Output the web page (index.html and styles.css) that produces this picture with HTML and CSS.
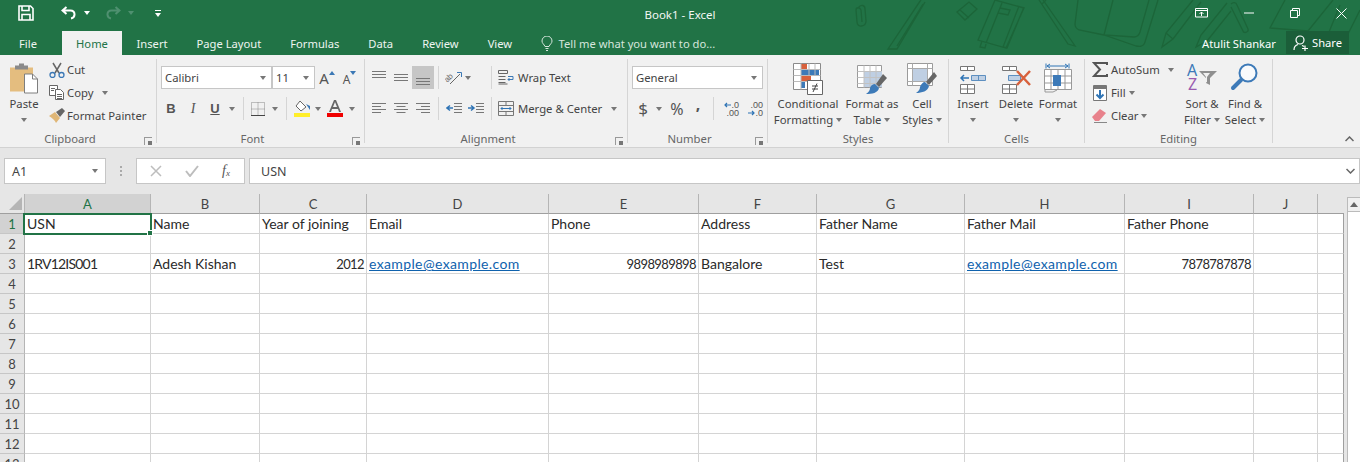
FILE: index.html
```html
<!DOCTYPE html>
<html lang="en">
<head>
<meta charset="utf-8">
<title>Book1 - Excel</title>
<link rel="stylesheet" href="styles.css">
</head>
<body>
<header class="chrome">
  <svg class="doodles" width="520" height="55" viewBox="840 0 520 55" fill="none" stroke="#1c6539" stroke-width="1.3">
    <path d="M858 8c3-4 7-3 7 1l1 12c0 6-9 7-9 1l-1-12c0-3 4-3 5 0l1 12"/>
    <path d="M921 0l-33 49h9l28-47M892 43l28-42M897 46l26-42"/>
    <path d="M957 12l12-10 8 7-12 11zM960 10l9 8"/>
    <path d="M995 0l-17 40 28 8 18-40zM1002 3l-16 40M1019 6l-16 41 4 1 17-41M1000 8l10 2-2 5-10-2zM982 41l-2 6 5 1 1-4"/>
    <path d="M1043 0l28 40 4 6-7-2-29-44M1046 0l-4 4"/>
    <path d="M1078 0l-3 24c0 3 2 5 4 6l25 5 32 11c4 1 8 0 9-4l13-42M1113 0l-9 35 30 2c3 0 5-2 6-5l9-32"/>
    <path d="M1193 0l-27 33-4 14 11-8 28-37M1166 33l7 6"/>
    <path d="M1231 4c2-2 5-2 6 1l11 24c1 3-4 5-5 2l-12-24M1227 3l-26 32-5 12 11-6 24-30"/>
    <path d="M1285 0l-15 28 38 3 25-31M1340 5l-13 32M1345 40l15-30"/>
  </svg>
  <div class="titlebar">
    <div class="qat">
      <svg class="q-save" width="16" height="16" viewBox="0 0 16 16" fill="none" stroke="#fff" stroke-width="1.6"><path d="M1 1h11.5L15 3.500V15H1z"/><path d="M4 1v4.500h7V1M4 15V9.500h8V15"/></svg>
      <svg class="q-undo" width="16" height="14" viewBox="0 0 16 14" fill="none" stroke="#fff" stroke-width="2"><path d="M5.500 1L1.500 4.500 5.500 8M2 4.500h7.500c5 0 5.500 7 .5 8"/></svg>
      <span class="caret caret-white q-c1"></span>
      <svg class="q-redo" width="16" height="14" viewBox="0 0 16 14" fill="none" stroke="#4f9070" stroke-width="2"><path d="M10.500 1l4 3.500-4 3.500M14 4.500H6.500c-5 0-5.500 7-.5 8"/></svg>
      <span class="caret caret-dim q-c2"></span>
      <span class="q-custom"><i></i><span class="caret caret-white"></span></span>
    </div>
    <div class="doc-title">Book1 - Excel</div>
    <div class="winctl">
      <svg width="14" height="10" viewBox="0 0 14 10" fill="none" stroke="#fff"><path d="M.5.500h12v8.500H.5zM.5 2.500h12M6.500 8V4M4.500 6l2-2 2 2"/></svg>
      <svg width="10" height="2" viewBox="0 0 10 2" fill="none" stroke="#fff"><path d="M0 1h10"/></svg>
      <svg width="10" height="10" viewBox="0 0 10 10" fill="none" stroke="#fff"><path d="M.5 2.500h7v7h-7zM2.500 2.500v-2h7v7h-2"/></svg>
      <svg width="11" height="11" viewBox="0 0 11 11" fill="none" stroke="#fff"><path d="M.5.500l10 10M10.500.500l-10 10"/></svg>
    </div>
  </div>
  <nav class="tabs">
    <span class="tab tab-file">File</span>
    <span class="tab tab-home">Home</span>
    <span class="tab">Insert</span>
    <span class="tab">Page Layout</span>
    <span class="tab">Formulas</span>
    <span class="tab">Data</span>
    <span class="tab">Review</span>
    <span class="tab">View</span>
    <span class="tell">
      <svg width="12" height="15" viewBox="0 0 12 15" fill="none" stroke="#d6e6dd"><path d="M4 10.500C3 8 1 7.500 1 5a5 5 0 0 1 10 0c0 2.500-2 3-3 5.500zM4.500 12.500h3M5 14.500h2"/></svg>
      Tell me what you want to do...
    </span>
    <span class="user">Atulit Shankar</span>
    <span class="share">
      <svg width="16" height="16" viewBox="0 0 16 16" fill="none" stroke="#fff" stroke-width="1.200"><circle cx="7" cy="5" r="4"/><path d="M1 15c0-3 2-5 4-5.500M9 10.500c1 .3 1.500 .5 2 1M9 13.500h6M12 10.500v6"/></svg>
      Share
    </span>
  </nav>
</header>

<section class="ribbon">
  <div class="group g-clip">
    <div class="body clip-body">
      <div class="big paste">
        <svg width="30" height="31" viewBox="0 0 30 31"><path fill="#e4bd7f" d="M1 4h23v24H1z"/><path fill="#8a8a8a" d="M6 2h13v4H6zM10 0h5v2h-5z"/><path fill="#fff" stroke="#7e7e7e" d="M15.500 10.500h8l5 5v14h-13z"/><path fill="none" stroke="#7e7e7e" d="M23.500 10.500v5h5"/></svg>
        <span>Paste</span>
        <span class="caret"></span>
      </div>
      <div class="smalls">
        <div class="small"><svg width="16" height="16" viewBox="0 0 16 16" fill="none"><path stroke="#666" stroke-width="1.500" d="M4 1l6 10M12 1L6 11"/><circle cx="3.500" cy="13" r="2.500" stroke="#3b78b5" stroke-width="1.300"/><circle cx="12.500" cy="13" r="2.500" stroke="#3b78b5" stroke-width="1.300"/></svg><span>Cut</span></div>
        <div class="small"><svg width="16" height="15" viewBox="0 0 16 15" fill="#fff" stroke="#666"><path d="M.5.500h8v10h-8z"/><path d="M6.500 4.500h5l3 3v7h-8z"/><path d="M8 9.500h5M8 11.500h5M8 13.500h5M2 3.500h4M2 5.500h3"/></svg><span>Copy</span><span class="caret c-copy"></span></div>
        <div class="small"><svg width="16" height="15" viewBox="0 0 16 15"><path fill="#e0b777" d="M0 8l6-4 5 6-4 5c-1-3-4-5-7-7z"/><path fill="#666" d="M7 4l6-4 3 3-5 6z"/></svg><span>Format Painter</span></div>
      </div>
    </div>
    <div class="glabel has-launcher">Clipboard</div>
    <span class="launcher"></span>
  </div>

  <div class="group g-font">
    <div class="body">
      <div class="rrow font-r1">
        <div class="combo combo-font"><span>Calibri</span><span class="caret"></span></div>
        <div class="combo combo-size"><span>11</span><span class="caret"></span></div>
        <div class="tool tool-grow"><span class="a-big">A</span><svg width="6" height="4" viewBox="0 0 6 4"><path fill="#3b78b5" d="M0 4l3-4 3 4z"/></svg></div>
        <div class="tool tool-grow"><span class="a-small">A</span><svg width="6" height="4" viewBox="0 0 6 4"><path fill="#3b78b5" d="M0 0l3 4 3-4z"/></svg></div>
      </div>
      <div class="rrow grid-row font-r2">
        <div class="tool t-b">B</div>
        <div class="tool t-i">I</div>
        <div class="tool t-u">U</div>
        <div class="tool"><span class="caret"></span></div>
        <div class="tool"><i class="vsep"></i></div>
        <div class="tool"><svg width="14" height="14" viewBox="0 0 14 14" fill="none" stroke="#888" stroke-dasharray="1 1"><path d="M.5.500h13v13H.5zM.5 7h13M7 .500v13"/><path stroke="#444" stroke-dasharray="none" d="M0 13.500h14"/></svg></div>
        <div class="tool"><span class="caret"></span></div>
        <div class="tool"><i class="vsep"></i></div>
        <div class="tool"><svg width="17" height="17" viewBox="0 0 17 17"><path fill="#fff" stroke="#666" d="M6 1l6 6-5 4-5-5z"/><path fill="#3b78b5" d="M12 4l4 2v4z"/><path fill="#ffee2a" d="M0 13h16v4H0z"/></svg></div>
        <div class="tool"><span class="caret"></span></div>
        <div class="tool"><svg width="16" height="17" viewBox="0 0 16 17"><path fill="#666" d="M7 0h2l5 12h-2l-1-3H5l-1 3H2zM6 7h4L8 2z"/><path fill="#f00000" d="M0 13h16v4H0z"/></svg></div>
        <div class="tool"><span class="caret"></span></div>
      </div>
    </div>
    <div class="glabel has-launcher">Font</div>
    <span class="launcher"></span>
  </div>

  <div class="group g-align">
    <div class="body">
      <div class="rrow grid-row align-r1">
        <div class="tool tool-top"><svg width="14" height="8" viewBox="0 0 14 8" stroke="#777"><path d="M0 .500h14M0 3.500h14M0 6.500h14"/></svg></div>
        <div class="tool"><svg width="14" height="8" viewBox="0 0 14 8" stroke="#777"><path d="M0 .500h14M0 3.500h14M0 6.500h14"/></svg></div>
        <div class="tool tool-on"><svg width="14" height="8" viewBox="0 0 14 8" stroke="#777"><path d="M0 .500h14M0 3.500h14M0 6.500h14"/></svg></div>
        <div class="tool"><i class="vsep"></i></div>
        <div class="tool"><svg width="18" height="15" viewBox="0 0 18 15" fill="none" stroke="#666"><text class="orient" transform="rotate(-45 5 10)" x="1" y="10">ab</text><path d="M5 14L15 4"/><path stroke="#3b78b5" d="M12 2.500h4.500V7"/></svg></div>
        <div class="tool tool-start"><span class="caret"></span></div>
        <div class="tool"><i class="vsep"></i></div>
        <div class="small wide-item"><svg width="16" height="15" viewBox="0 0 16 15" fill="none" stroke="#666"><path d="M.5.500h9v3h-9zM.5 6.500h7M.5 9.500h7M.5 12.500h7M.5 14h9"/><path stroke="#3b78b5" d="M10 6.500h5v3h-5M11.500 8L10 9.500l1.500 1.500"/></svg><span>Wrap Text</span></div>
      </div>
      <div class="rrow grid-row align-r2">
        <div class="tool"><svg width="14" height="11" viewBox="0 0 14 11" stroke="#777"><path d="M0 .500h14M0 3.500h9M0 6.500h14M0 9.500h9"/></svg></div>
        <div class="tool"><svg width="14" height="11" viewBox="0 0 14 11" stroke="#777"><path d="M0 .500h14M2.500 3.500h9M0 6.500h14M2.500 9.500h9"/></svg></div>
        <div class="tool"><svg width="14" height="11" viewBox="0 0 14 11" stroke="#777"><path d="M0 .500h14M5 3.500h9M0 6.500h14M5 9.500h9"/></svg></div>
        <div class="tool"><i class="vsep"></i></div>
        <div class="tool"><svg width="16" height="11" viewBox="0 0 16 11" fill="none" stroke="#777"><path d="M8 .500h8M8 3.500h8M8 6.500h8M8 9.500h8"/><path stroke="#2f74b5" stroke-width="1.500" d="M7 5H1M4 2.500L1 5l3 2.500"/></svg></div>
        <div class="tool"><svg width="16" height="11" viewBox="0 0 16 11" fill="none" stroke="#777"><path d="M8 .500h8M8 3.500h8M8 6.500h8M8 9.500h8"/><path stroke="#2f74b5" stroke-width="1.500" d="M0 5h6M3 2.500L6 5 3 7.500"/></svg></div>
        <div class="tool"><i class="vsep"></i></div>
        <div class="small wide-item"><svg width="16" height="15" viewBox="0 0 16 15" fill="none" stroke="#777"><path d="M.5.500h15v14H.5zM.5 4.500h15M.5 10.500h15M8 .500v4M8 10.500v4"/><path stroke="#2f74b5" d="M3 7.500h10M4.500 6L3 7.500 4.500 9M11.500 6L13 7.500 11.500 9"/></svg><span>Merge &amp; Center</span><span class="caret c-merge"></span></div>
      </div>
    </div>
    <div class="glabel has-launcher">Alignment</div>
    <span class="launcher"></span>
  </div>

  <div class="group g-num">
    <div class="body">
      <div class="rrow font-r1">
        <div class="combo combo-num"><span>General</span><span class="caret"></span></div>
      </div>
      <div class="rrow grid-row num-r2">
        <div class="tool t-dollar">$</div>
        <div class="tool"><span class="caret"></span></div>
        <div class="tool t-pct">%</div>
        <div class="tool t-comma">,</div>
        <div class="tool"><i class="vsep"></i></div>
        <div class="tool t-dec">
          <span class="dec-line"><svg width="7" height="6" viewBox="0 0 7 6" fill="none" stroke="#2f74b5" stroke-width="1.200"><path d="M7 3H1M3 1L1 3l2 2"/></svg>.0</span>
          <span class="dec-line">.00</span>
        </div>
        <div class="tool t-dec">
          <span class="dec-line">.00</span>
          <span class="dec-line"><svg width="7" height="6" viewBox="0 0 7 6" fill="none" stroke="#2f74b5" stroke-width="1.200"><path d="M0 3h6M4 1l2 2-2 2"/></svg>.0</span>
        </div>
      </div>
    </div>
    <div class="glabel has-launcher">Number</div>
    <span class="launcher"></span>
  </div>

  <div class="group g-styles">
    <div class="body bigs">
      <div class="big bw-72">
        <svg width="30" height="32" viewBox="0 0 30 32"><path fill="#fff" stroke="#8a8a8a" d="M.5 .500h27v26H.5z"/><path fill="#d8613c" d="M8 1h6v5H8zM8 13h10v5H8z"/><path fill="#3d7ab8" d="M8 7h18v5H8zM8 19h4v6H8z"/><path stroke="#bbb" fill="none" d="M.5 6.500h27M.5 12.500h27M.5 18.500h27M8 .500v26M16 .500v12M22 .500v12"/><path fill="#fff" stroke="#666" d="M14.500 17.500h15v14h-15z"/><path stroke="#444" fill="none" d="M19 23h6M19 26h6M24 20.500l-4 8.500"/></svg>
        <span>Conditional<br>Formatting<i class="caret c-in"></i></span>
      </div>
      <div class="big bw-56">
        <svg width="30" height="32" viewBox="0 0 30 32"><path fill="#fff" stroke="#9a9a9a" d="M.5 2.500h24v22H.5z"/><path fill="#bfcfe3" d="M7 8h18v16H7z"/><path stroke="#c2c2c2" fill="none" d="M.5 8.500h24M.5 14.500h24M.5 20.500h24M7 2.500v22M13 2.500v22M19 2.500v22"/><path fill="#666" d="M26 11l4 4-8 9-3-3z"/><path fill="#3d7ab8" d="M18 21l4 4c-1 5-7 6-13 6 3-2 4-4 4-6 1-3 3-4 5-4z"/></svg>
        <span>Format as<br>Table<i class="caret c-in"></i></span>
      </div>
      <div class="big bw-44">
        <svg width="30" height="32" viewBox="0 0 30 32"><path fill="#fff" stroke="#9a9a9a" d="M.5 .500h25v22H.5z"/><path fill="#bfcfe3" d="M6 6h14v12H6z"/><path stroke="#aaa" fill="none" d="M5.500 .500v22M20.500 .500v22M.5 5.500h25M.5 18.500h25"/><path fill="#666" d="M27 9l3 4-8 9-3-3z"/><path fill="#3d7ab8" d="M18 19l4 4c-1 5-7 7-13 7 3-2 4-4 4-6 1-3 3-5 5-5z"/></svg>
        <span>Cell<br>Styles<i class="caret c-in"></i></span>
      </div>
    </div>
    <div class="glabel">Styles</div>
  </div>

  <div class="group g-cells">
    <div class="body bigs">
      <div class="big bw-42">
        <svg width="28" height="32" viewBox="0 0 28 32" fill="#fff" stroke="#777"><path d="M1.500 3.500h14v4h-14zM8.500 3.500v4M1.500 21.500h14v9h-14zM8.500 21.500v9M1.500 26h14"/><path fill="#bfd0e4" stroke="#5d8fc0" d="M12.500 12.500h14v5h-14zM19.500 12.500v5"/><path fill="none" stroke="#2f74b5" stroke-width="1.500" d="M10 15H2M5 12l-3 3 3 3"/></svg>
        <span>Insert</span><span class="caret c-low"></span>
      </div>
      <div class="big bw-44">
        <svg width="30" height="32" viewBox="0 0 30 32" fill="#fff" stroke="#777"><path d="M1.500 3.500h14v4h-14zM8.500 3.500v4M1.500 21.500h14v9h-14zM8.500 21.500v9M1.500 26h14"/><path fill="#bfd0e4" stroke="#5d8fc0" d="M7.500 12.500h12v5h-12z"/><path fill="none" stroke="#d8613c" stroke-width="2.500" d="M16 8l13 14M29 8L16 22"/></svg>
        <span>Delete</span><span class="caret c-low"></span>
      </div>
      <div class="big bw-40">
        <svg width="28" height="32" viewBox="0 0 28 32" fill="#fff" stroke="#999"><path fill="none" stroke="#2f74b5" d="M2 .500v5M25 .500v5M3 3h21M6 1l-3 2 3 2M21 1l3 2-3 2"/><path d="M.500 6.500h27v20H.500z"/><path fill="none" d="M.5 13h27M.5 20h27M7 6.500v20M14 6.500v20M21 6.500v20"/><path fill="#3d7ab8" stroke="none" d="M9 12h8v11H9z"/><path fill="none" d="M1 27v2h8l4-2"/></svg>
        <span>Format</span><span class="caret c-low"></span>
      </div>
    </div>
    <div class="glabel">Cells</div>
  </div>

  <div class="group g-edit">
    <div class="body edit-body">
      <div class="smalls edit-smalls">
        <div class="small"><svg width="16" height="15" viewBox="0 0 16 15" fill="none" stroke="#555" stroke-width="2"><path d="M15 3V1H2l6 6.500L2 14h13v-2"/></svg><span>AutoSum</span><span class="caret c-auto"></span></div>
        <div class="small"><svg width="14" height="16" viewBox="0 0 14 16"><path fill="#fff" stroke="#777" d="M.5 .500h13v15H.5z"/><path fill="#777" d="M1 1h12v3H1z"/><path fill="none" stroke="#2f74b5" stroke-width="2" d="M7 5v8M3.500 9.500L7 13l3.500-3.500"/></svg><span>Fill</span><span class="caret c-fill"></span></div>
        <div class="small"><svg width="16" height="15" viewBox="0 0 16 15"><path fill="#e8828c" d="M0 9l8-8 6 4-7 8H3z"/><path stroke="#888" d="M2 14.500h13"/></svg><span>Clear</span><span class="caret c-fill"></span></div>
      </div>
      <div class="big bw-44">
        <svg width="32" height="32" viewBox="0 0 32 32"><text class="az a" x="1" y="13">A</text><text class="az z" x="2" y="27">Z</text><path fill="#8f8f8f" d="M13 8h18l-7 7v7l-4-2v-5zM17 10l3 4v5l1 .5V14l3-4z"/></svg>
        <span>Sort &amp;<br>Filter<i class="caret c-in"></i></span>
      </div>
      <div class="big bw-42">
        <svg width="30" height="32" viewBox="0 0 30 32" fill="none"><circle cx="18" cy="10" r="8.500" fill="#f8fafc" stroke="#3d7ab8" stroke-width="2"/><path stroke="#3d7ab8" stroke-width="4" stroke-linecap="round" d="M11 17l-8 8"/></svg>
        <span>Find &amp;<br>Select<i class="caret c-in"></i></span>
      </div>
    </div>
    <div class="glabel">Editing</div>
  </div>
  <svg class="collapse" width="9" height="6" viewBox="0 0 9 6" fill="none" stroke="#666" stroke-width="1.500"><path d="M.5 5l4-4 4 4"/></svg>
</section>

<section class="fbar">
  <div class="namebox"><span>A1</span><span class="caret"></span></div>
  <div class="dots"><i></i><i></i><i></i></div>
  <div class="fbtns">
    <svg width="12" height="12" viewBox="0 0 12 12" fill="none" stroke="#bdbdbd" stroke-width="1.500"><path d="M1 1l10 10M11 1L1 11"/></svg>
    <svg width="14" height="12" viewBox="0 0 14 12" fill="none" stroke="#bdbdbd" stroke-width="2"><path d="M1 6l4 5 8-10"/></svg>
    <span class="fx">f<sub>x</sub></span>
  </div>
  <div class="finput"><span>USN</span>
    <svg width="9" height="6" viewBox="0 0 9 6" fill="none" stroke="#666" stroke-width="1.500"><path d="M.5 1l4 4 4-4"/></svg>
  </div>
</section>

<main class="sheet">
  <table class="grid">
    <colgroup>
      <col class="c-row"><col class="c-a"><col class="c-b"><col class="c-c"><col class="c-d"><col class="c-e"><col class="c-f"><col class="c-g"><col class="c-h"><col class="c-i"><col class="c-j"><col class="c-k">
    </colgroup>
    <thead>
      <tr>
        <th class="corner"><i></i></th>
        <th class="sel-head">A</th><th>B</th><th>C</th><th>D</th><th>E</th><th>F</th><th>G</th><th>H</th><th>I</th><th>J</th><th class="blank"></th>
      </tr>
    </thead>
    <tbody>
      <tr><th class="sel-row">1</th><td class="active">USN<i class="cursor"></i></td><td>Name</td><td>Year of joining</td><td>Email</td><td>Phone</td><td>Address</td><td>Father Name</td><td>Father Mail</td><td>Father Phone</td><td></td><td></td></tr>
      <tr><th>2</th><td></td><td></td><td></td><td></td><td></td><td></td><td></td><td></td><td></td><td></td><td></td></tr>
      <tr><th>3</th><td class="digits">1RV12IS001</td><td>Adesh Kishan</td><td class="num">2012</td><td><a class="link">example@example.com</a></td><td class="num">9898989898</td><td>Bangalore</td><td>Test</td><td><a class="link">example@example.com</a></td><td class="num">7878787878</td><td></td><td></td></tr>
      <tr><th>4</th><td></td><td></td><td></td><td></td><td></td><td></td><td></td><td></td><td></td><td></td><td></td></tr>
      <tr><th>5</th><td></td><td></td><td></td><td></td><td></td><td></td><td></td><td></td><td></td><td></td><td></td></tr>
      <tr><th>6</th><td></td><td></td><td></td><td></td><td></td><td></td><td></td><td></td><td></td><td></td><td></td></tr>
      <tr><th>7</th><td></td><td></td><td></td><td></td><td></td><td></td><td></td><td></td><td></td><td></td><td></td></tr>
      <tr><th>8</th><td></td><td></td><td></td><td></td><td></td><td></td><td></td><td></td><td></td><td></td><td></td></tr>
      <tr><th>9</th><td></td><td></td><td></td><td></td><td></td><td></td><td></td><td></td><td></td><td></td><td></td></tr>
      <tr><th>10</th><td></td><td></td><td></td><td></td><td></td><td></td><td></td><td></td><td></td><td></td><td></td></tr>
      <tr><th>11</th><td></td><td></td><td></td><td></td><td></td><td></td><td></td><td></td><td></td><td></td><td></td></tr>
      <tr><th>12</th><td></td><td></td><td></td><td></td><td></td><td></td><td></td><td></td><td></td><td></td><td></td></tr>
      <tr><th>13</th><td></td><td></td><td></td><td></td><td></td><td></td><td></td><td></td><td></td><td></td><td></td></tr>
    </tbody>
  </table>
  <div class="vscroll">
    <div class="sb-up"><span class="caret caret-up"></span></div>
  </div>
</main>
</body>
</html>
```
FILE: styles.css
```css
* { box-sizing: border-box; }
html, body { margin: 0; height: 462px; overflow: hidden; }
body { width: 1360px; background: #e6e6e6; font-family: "Noto Sans", "Open Sans", sans-serif; font-size: 11.3px; color: #444; }
i { font-style: normal; }

.caret { display: inline-block; width: 0; height: 0; border-left: 3.5px solid transparent; border-right: 3.5px solid transparent; border-top: 4px solid #777; flex: none; }
.caret-white { border-top-color: #fff; }
.caret-dim { border-top-color: #4f9070; }
.caret-up { border-top: 0; border-bottom: 5px solid #666; border-left-width: 4px; border-right-width: 4px; }

/* title bar and tabs */
.chrome { position: relative; height: 55px; background: #217346; color: #fff; overflow: hidden; }
.doodles { position: absolute; left: 840px; top: 0; }
.titlebar { position: relative; height: 31px; display: flex; align-items: flex-start; }
.qat { width: 170px; display: flex; align-items: center; height: 26px; }
.q-save { margin-left: 18px; }
.q-undo { margin-left: 27px; }
.q-c1 { margin-left: 7px; }
.q-redo { margin-left: 15px; }
.q-c2 { margin-left: 7px; }
.q-custom { margin-left: 21px; display: flex; flex-direction: column; align-items: center; gap: 2px; }
.q-custom i { width: 6px; height: 1px; background: #fff; }
.doc-title { position: absolute; left: 0; right: 0; top: 6px; text-align: center; font-size: 11.5px; line-height: 17px; color: #f2f7f4; }
.winctl { margin-left: auto; height: 26px; display: flex; align-items: center; }
.winctl svg { margin-right: 36px; }
.winctl svg:first-child { margin-right: 35px; }
.winctl svg:last-child { margin-right: 13px; }

.tabs { position: relative; height: 24px; display: flex; align-items: stretch; font-size: 11.2px; }
.tab { display: flex; align-items: center; justify-content: center; color: #eef5f1; padding: 0 14.5px; }
.tab-file { width: 62px; padding: 0 6px 0 0; }
.tab-home { width: 60px; padding: 0; background: #f1f1f1; color: #217346; }
.tell { display: flex; align-items: center; gap: 6px; margin-left: 14px; color: #d6e6dd; }
.user { margin-left: auto; align-self: center; color: #fff; }
.share { display: flex; align-items: center; gap: 3px; margin: 0 11px 1px 10px; width: 63px; padding-left: 7px; background: #1b5e39; color: #fff; }

/* ribbon */
.ribbon { position: relative; height: 93px; padding-top: 4px; background: #f1f1f1; border-bottom: 1px solid #d2d2d2; display: flex; align-items: flex-start; }
.group { position: relative; height: 84px; border-right: 1px solid #d5d5d5; flex: none; }
.g-clip { width: 157px; }
.g-font { width: 208px; }
.g-align { width: 263px; }
.g-num { width: 140px; }
.g-styles { width: 181px; }
.g-cells { width: 136px; }
.g-edit { width: 188px; }
.body { height: 72px; padding-top: 7px; }
.glabel { height: 12px; line-height: 16px; text-align: center; color: #666; font-size: 11.3px; white-space: nowrap; }
.has-launcher { padding-right: 16px; }
.launcher { position: absolute; right: 4px; bottom: -2px; width: 8px; height: 8px; border-left: 1px solid #999; border-top: 1px solid #999; }
.launcher::after { content: ""; position: absolute; right: 0; bottom: 0; width: 4px; height: 4px; background: #777; }

.clip-body { display: flex; padding: 0 0 0 8px; }
.paste { width: 32px; padding-top: 4px; }
.smalls { display: flex; flex-direction: column; margin: -1px 0 0 9px; }
.small { display: flex; align-items: center; height: 23px; white-space: nowrap; color: #444; flex: none; }
.small svg { width: 16px; flex: none; margin-right: 2px; }
.c-copy { margin-left: 9px; }
.c-merge { margin-left: 9px; }

.big { display: flex; flex-direction: column; align-items: center; text-align: center; flex: none; line-height: 16px; white-space: nowrap; }
.big svg { height: 32px; margin-bottom: 1px; flex: none; }
.big .caret { margin-top: 6px; }
.big .c-in { margin: 0 0 2px 3px; vertical-align: middle; }
.big .c-low { margin-top: 6px; }
.bigs { display: flex; padding-top: 4px; }
.bw-72 { width: 72px; }
.bw-56 { width: 56px; }
.bw-44 { width: 44px; }
.bw-42 { width: 42px; }
.bw-40 { width: 40px; }
.g-styles .bigs { padding-left: 4px; }
.g-cells .bigs { padding-left: 3px; }

.rrow { display: flex; align-items: center; height: 23px; }
.grid-row { display: grid; margin-top: 8px; }
.font-r1 { padding-left: 4px; }
.font-r2 { grid-template-columns: 22px 22px 22px 12px 11px 18px 16px 6px 26px 6px 28px 6px; padding-left: 3px; }
.align-r1 { margin-top: 0; grid-template-columns: 22px 22px 22px 9px 22px 21px 10px auto; padding-left: 3px; }
.align-r2 { grid-template-columns: 22px 22px 22px 9px 22px 22px 9px auto; padding-left: 3px; }
.num-r2 { grid-template-columns: 22px 10px 26px 16px 14px 20px 24px; padding-left: 4px; }

.tool { display: flex; align-items: center; justify-content: center; height: 23px; font-size: 13px; color: #555; position: relative; }
.tool-start { justify-content: flex-start; }
.tool-on { background: #c6c6c6; align-items: flex-end; padding-bottom: 3px; }
.tool-top { align-items: flex-start; padding-top: 5px; }
.vsep { width: 1px; height: 23px; background: #d5d5d5; }
.orient { font: 8px "Liberation Sans", sans-serif; fill: #666; stroke: none; }
.t-b { font-weight: 700; font-family: "Liberation Sans", sans-serif; }
.t-i { font-style: italic; font-family: "Liberation Serif", serif; font-size: 14px; }
.t-u { font-weight: 700; text-decoration: underline; font-family: "Liberation Sans", sans-serif; }
.t-dollar { font-size: 17px; }
.t-pct { font-size: 16px; }
.t-comma { font-weight: 700; font-size: 16px; padding-bottom: 10px; }
.t-dec { flex-direction: column; align-items: flex-end; justify-content: center; padding-right: 1px; font-size: 9px; line-height: 8px; font-family: "Liberation Sans", sans-serif; }
.dec-line { display: flex; align-items: center; }
.wide-item { margin-left: 2px; }
.wide-item svg { margin-right: 4px; }

.combo { display: flex; align-items: center; justify-content: space-between; height: 23px; background: #fff; border: 1px solid #c6c6c6; padding: 0 5px 0 3px; color: #444; }
.combo-font { width: 111px; }
.combo-size { width: 43px; padding-left: 3px; }
.combo-num { width: 131px; }
.tool-grow { width: 21px; margin-left: 1px; align-items: flex-end; padding-bottom: 3px; }
.font-r1 .tool-grow:nth-child(3) { width: 22px; }
.tool-grow svg { margin-bottom: 11px; }
.a-big { font-size: 15px; line-height: 16px; color: #555; }
.a-small { font-size: 12px; line-height: 13px; color: #555; }

.edit-body { display: flex; padding: 0 0 0 7px; }
.edit-smalls { margin-left: 0; width: 88px; }
.edit-smalls .small svg { margin-right: 3px; }
.edit-body .big { padding-top: 4px; }
.c-auto { margin-left: 8px; }
.c-fill { margin-left: 3px; }
.az { font: 400 16px "Noto Sans", sans-serif; }
.az.a { fill: #3d7ab8; }
.az.z { fill: #9a5bb0; }
.collapse { position: absolute; right: 6px; top: 81px; }

/* formula bar */
.fbar { height: 46px; padding: 10px 0 0 4px; display: flex; align-items: flex-start; background: #e6e6e6; }
.namebox { width: 102px; height: 26px; background: #fff; border: 1px solid #c6c6c6; display: flex; align-items: center; justify-content: space-between; padding: 0 7px; font-size: 12.5px; }
.dots { width: 30px; height: 26px; display: flex; flex-direction: column; align-items: center; justify-content: center; gap: 2px; }
.dots i { width: 2px; height: 2px; background: #aaa; }
.fbtns { width: 109px; height: 26px; background: #fff; border: 1px solid #c6c6c6; display: flex; align-items: center; gap: 23px; padding-left: 13px; }
.fx { font: italic 14px "Liberation Serif", serif; line-height: 14px; color: #555; }
.fx sub { font-size: 9px; line-height: 0; vertical-align: -1px; }
.finput { flex: 1; height: 26px; margin-left: 4px; background: #fff; border: 1px solid #c6c6c6; display: flex; align-items: center; justify-content: space-between; padding: 0 4px 0 11px; font-size: 12.5px; }

/* sheet */
.sheet { height: 268px; display: flex; align-items: flex-start; background: #e6e6e6; }
.grid { width: 1344px; flex: none; border-collapse: separate; border-spacing: 0; table-layout: fixed; font-family: "Lato", "Noto Sans", sans-serif; font-size: 14px; color: #2a2a2a; }
.c-row { width: 25px; } .c-a { width: 126px; } .c-b { width: 109px; } .c-c { width: 107px; } .c-d { width: 182px; } .c-e { width: 150px; } .c-f { width: 118px; } .c-g { width: 148px; } .c-h { width: 160px; } .c-i { width: 129px; } .c-j { width: 64px; } .c-k { width: 26px; }
.grid tr { height: 20px; }
.grid th, .grid td { padding: 0; height: 20px; overflow: visible; white-space: nowrap; }
.grid th { background: #e6e6e6; font-weight: 400; text-align: center; font-size: 13px; color: #444; border-right: 1px solid #b5b5b5; border-bottom: 1px solid #c6c6c6; }
.grid thead th { border-bottom: 1px solid #9f9f9f; }
.grid thead th.blank { border-right: 0; }
.grid td { background: #fff; padding: 0 2px; border-right: 1px solid #d4d4d4; border-bottom: 1px solid #d4d4d4; }
.grid td:last-child { border-right: 1px solid #9f9f9f; }
.grid td.num { text-align: right; font-size: 13px; letter-spacing: -0.6px; }
.grid td.digits { letter-spacing: -0.8px; }
.link { color: #0f62ad; text-decoration: underline; letter-spacing: 0.37px; }
.corner i { display: block; width: 0; height: 0; margin: 0 0 0 9px; border-left: 13px solid transparent; border-bottom: 13px solid #b5b5b5; }
.grid thead th.sel-head { background: #d2d2d2; color: #217346; }
.grid th.sel-row { background: #d2d2d2; color: #217346; }
.active { position: relative; }
.cursor { position: absolute; left: -2px; top: -1px; width: 129px; height: 22px; border: 2px solid #217346; }
.cursor::after { content: ""; position: absolute; right: -3px; bottom: -3px; box-sizing: content-box; width: 4px; height: 4px; background: #217346; border: 1px solid #fff; }
.vscroll { flex: 1; margin: 3px 0 0 3px; height: 270px; background: #fff; border-left: 1px solid #bbb; }
.sb-up { height: 15px; border-top: 1px solid #bbb; border-bottom: 1px solid #bbb; background: #f0f0f0; display: flex; align-items: center; justify-content: center; }
```
